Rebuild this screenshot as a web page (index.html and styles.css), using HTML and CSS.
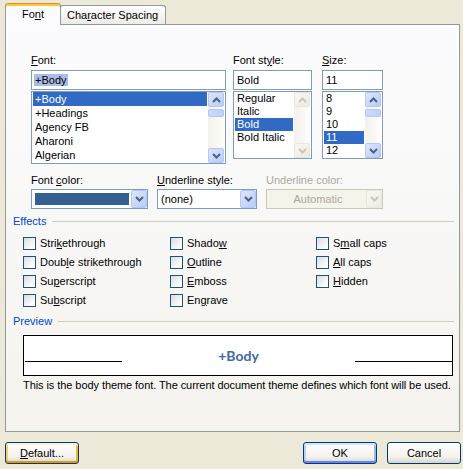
FILE: index.html
```html
<!DOCTYPE html>
<html lang="en">
<head>
    <meta charset="UTF-8">
    <title>Font</title>
    <link rel="stylesheet" href="styles.css">
</head>
<body>
<div class="dialog">
    <div class="tabs">
        <div class="tab tab-active">Fo<u>n</u>t</div>
        <div class="tab">Cha<u>r</u>acter Spacing</div>
    </div>

    <div class="panel">
        <div class="pickers">
            <div class="picker picker-font">
                <div class="label"><u>F</u>ont:</div>
                <div class="input"><span class="sel-text">+Body</span></div>
                <div class="listbox lb-font">
                    <ul class="items">
                        <li class="selected">+Body</li>
                        <li>+Headings</li>
                        <li>Agency FB</li>
                        <li>Aharoni</li>
                        <li>Algerian</li>
                    </ul>
                    <div class="scrollbar">
                        <div class="sb-btn"><svg width="9" height="6" viewBox="0 0 9 6"><polyline points="1,5 4.5,1.5 8,5" /></svg></div>
                        <div class="sb-track"><div class="sb-thumb"></div></div>
                        <div class="sb-btn"><svg width="9" height="6" viewBox="0 0 9 6"><polyline points="1,1 4.5,4.5 8,1" /></svg></div>
                    </div>
                </div>
            </div>

            <div class="picker picker-style">
                <div class="label">Font st<u>y</u>le:</div>
                <div class="input">Bold</div>
                <div class="listbox lb-small">
                    <ul class="items">
                        <li>Regular</li>
                        <li>Italic</li>
                        <li class="selected">Bold</li>
                        <li>Bold Italic</li>
                    </ul>
                    <div class="scrollbar sb-disabled">
                        <div class="sb-btn"><svg width="9" height="6" viewBox="0 0 9 6"><polyline points="1,5 4.5,1.5 8,5" /></svg></div>
                        <div class="sb-track"></div>
                        <div class="sb-btn"><svg width="9" height="6" viewBox="0 0 9 6"><polyline points="1,1 4.5,4.5 8,1" /></svg></div>
                    </div>
                </div>
            </div>

            <div class="picker picker-size">
                <div class="label"><u>S</u>ize:</div>
                <div class="input">11</div>
                <div class="listbox lb-small">
                    <ul class="items">
                        <li>8</li>
                        <li>9</li>
                        <li>10</li>
                        <li class="selected">11</li>
                        <li>12</li>
                    </ul>
                    <div class="scrollbar">
                        <div class="sb-btn"><svg width="9" height="6" viewBox="0 0 9 6"><polyline points="1,5 4.5,1.5 8,5" /></svg></div>
                        <div class="sb-track"><div class="sb-thumb"></div></div>
                        <div class="sb-btn"><svg width="9" height="6" viewBox="0 0 9 6"><polyline points="1,1 4.5,4.5 8,1" /></svg></div>
                    </div>
                </div>
            </div>
        </div>

        <div class="combos">
            <div class="field field-color">
                <div class="label">Font <u>c</u>olor:</div>
                <div class="combo">
                    <div class="swatch"></div>
                    <div class="combo-btn"><svg width="9" height="6" viewBox="0 0 9 6"><polyline points="1,1 4.5,4.5 8,1" /></svg></div>
                </div>
            </div>
            <div class="field field-underline">
                <div class="label"><u>U</u>nderline style:</div>
                <div class="combo">
                    <span class="combo-text">(none)</span>
                    <div class="combo-btn"><svg width="9" height="6" viewBox="0 0 9 6"><polyline points="1,1 4.5,4.5 8,1" /></svg></div>
                </div>
            </div>
            <div class="field field-ucolor disabled">
                <div class="label">Underline color:</div>
                <div class="combo">
                    <span class="combo-text">Automatic</span>
                    <div class="combo-btn"><svg width="9" height="6" viewBox="0 0 9 6"><polyline points="1,1 4.5,4.5 8,1" /></svg></div>
                </div>
            </div>
        </div>

        <div class="group-title title-effects">Effects</div>
        <div class="effects">
            <div class="check"><span class="box"></span><span>Stri<u>k</u>ethrough</span></div>
            <div class="check"><span class="box"></span><span>Shado<u>w</u></span></div>
            <div class="check"><span class="box"></span><span>S<u>m</u>all caps</span></div>
            <div class="check"><span class="box"></span><span>Doub<u>l</u>e strikethrough</span></div>
            <div class="check"><span class="box"></span><span><u>O</u>utline</span></div>
            <div class="check"><span class="box"></span><span><u>A</u>ll caps</span></div>
            <div class="check"><span class="box"></span><span>Su<u>p</u>erscript</span></div>
            <div class="check"><span class="box"></span><span><u>E</u>mboss</span></div>
            <div class="check"><span class="box"></span><span><u>H</u>idden</span></div>
            <div class="check"><span class="box"></span><span>Su<u>b</u>script</span></div>
            <div class="check"><span class="box"></span><span>En<u>g</u>rave</span></div>
        </div>

        <div class="group-title title-preview">Preview</div>
        <div class="preview-box">
            <div class="preview-rule"></div>
            <div class="preview-text">+Body</div>
            <div class="preview-rule"></div>
        </div>
        <div class="preview-note">This is the body theme font. The current document theme defines which font will be used.</div>
    </div>

    <div class="buttons">
        <button class="btn btn-default"><u>D</u>efault...</button>
        <button class="btn btn-ok">OK</button>
        <button class="btn btn-cancel">Cancel</button>
    </div>
</div>
</body>
</html>
```

FILE: styles.css
```css
* { box-sizing: border-box; }

body {
    margin: 0;
    background: #ECE9D8;
    font: 11px/13px "Liberation Sans", Arial, sans-serif;
    color: #000;
}

.dialog {
    width: 463px;
    height: 469px;
    padding: 3px 2px 0 5px;
}

/* tabs */
.tabs {
    display: flex;
    align-items: flex-end;
    height: 21px;
}
.tab {
    height: 19px;
    padding: 3px 7px 0 6px;
    border: 1px solid #919B9C;
    border-bottom: none;
    border-radius: 3px 3px 0 0;
    background: linear-gradient(#FFFFFF, #ECEBE5);
    white-space: nowrap;
}
.tab-active {
    position: relative;
    z-index: 1;
    width: 56px;
    height: 22px;
    margin-bottom: -1px;
    padding: 4px 0 0;
    text-align: center;
    border-top: 1px solid #E68B2C;
    box-shadow: inset 0 2px #FFC73C;
    background: #FCFCFE;
}
.tab-active + .tab { margin-left: -1px; }

.panel {
    width: 455px;
    height: 408px;
    border: 1px solid #919B9C;
    background: linear-gradient(#FCFCFE, #F4F3EE);
    padding: 29px 5px 0 7px;
}

/* font / style / size pickers */
.pickers {
    display: flex;
    margin-left: 18px;
}
.picker-font { width: 195px; }
.picker-style { width: 79px; margin-left: 7px; }
.picker-size { width: 61px; margin-left: 10px; }

.label { margin-bottom: 3px; }

.input {
    height: 20px;
    margin-bottom: 1px;
    padding: 3px 2px 0 3px;
    border: 1px solid #7F9DB9;
    background: #fff;
}
.sel-text { background: #ABBDE7; padding: 0 1px; margin-left: -1px; }

.listbox {
    display: flex;
    padding: 0 1px;
    border: 1px solid #7F9DB9;
    background: #fff;
}
.lb-font { height: 73px; }
.lb-small { height: 68px; }

.items {
    flex: 1;
    margin: 0;
    padding: 0;
    list-style: none;
    overflow: hidden;
}
.items li {
    height: 13px;
    line-height: 13px;
    padding-left: 2px;
    white-space: nowrap;
}
.lb-font .items li { height: 14px; line-height: 14px; }
.items li.selected { background: #316AC5; color: #fff; }

.scrollbar {
    width: 16px;
    margin-left: 1px;
    display: flex;
    flex-direction: column;
    background: linear-gradient(to right, #F3F1EC, #FDFDFA);
}
.sb-btn {
    height: 15px;
    display: flex;
    align-items: center;
    justify-content: center;
    border: 1px solid #B4C8F6;
    border-radius: 2px;
    background: linear-gradient(135deg, #DCE6FE, #B9CCF7);
}
.sb-btn svg polyline,
.combo-btn svg polyline {
    fill: none;
    stroke: #4D6185;
    stroke-width: 2;
}
.sb-track { flex: 1; padding-top: 2px; }
.sb-thumb {
    height: 8px;
    border: 1px solid #B4C8F6;
    border-radius: 2px;
    background: linear-gradient(to right, #CCDBFD, #BDD0F8);
}
.sb-disabled .sb-btn {
    border-color: #E8E6DD;
    background: linear-gradient(135deg, #F9F8F3, #ECEAE2);
}
.sb-disabled .sb-btn svg polyline { stroke: #C9C7BA; }

/* colour and underline combos */
.combos {
    display: flex;
    margin: 10px 0 0 18px;
}
.field .label { margin-bottom: 2px; }
.field-color { width: 117px; }
.field-underline { width: 100px; margin-left: 9px; }
.field-ucolor { width: 117px; margin-left: 9px; }

.combo {
    display: flex;
    align-items: center;
    height: 20px;
    border: 1px solid #7F9DB9;
    background: #fff;
}
.combo-text { flex: 1; padding-left: 3px; }
.swatch {
    width: 94px;
    height: 12px;
    margin-left: 3px;
    background: #345F91;
}
.combo-btn {
    width: 16px;
    height: 18px;
    margin-left: auto;
    display: flex;
    align-items: center;
    justify-content: center;
    border: 1px solid #B4C8F6;
    border-radius: 2px;
    background: linear-gradient(135deg, #DCE6FE, #B9CCF7);
}
.disabled .label { color: #ACA899; }
.disabled .combo { border-color: #C9C7BA; background: #F5F4EA; }
.disabled .combo-text { text-align: center; color: #ACA899; }
.disabled .combo-btn { border-color: #E8E6DD; background: linear-gradient(135deg, #F9F8F3, #ECEAE2); }
.disabled .combo-btn svg polyline { stroke: #C9C7BA; }

/* group boxes */
.group-title {
    display: flex;
    align-items: center;
    color: #0046D5;
}
.group-title::after {
    content: "";
    flex: 1;
    height: 1px;
    margin-left: 6px;
    background: #D0D0BF;
}
.title-effects { margin-top: 6px; }
.title-preview { margin-top: 5px; }

.effects {
    display: grid;
    grid-template-columns: 147px 146px auto;
    grid-auto-rows: 19px;
    margin: 6px 0 0 10px;
}
.check {
    display: flex;
    align-items: center;
    gap: 4px;
    white-space: nowrap;
}
.box {
    width: 13px;
    height: 13px;
    border: 1px solid #1C5180;
    background: linear-gradient(135deg, #DCDCD7, #FFFFFF 85%);
}

.preview-box {
    display: flex;
    align-items: center;
    width: 430px;
    height: 41px;
    margin: 7px 0 0 10px;
    padding-left: 1px;
    border: 1px solid #000;
    background: #fff;
}
.preview-rule {
    width: 97px;
    height: 1px;
    margin-top: 12px;
    background: #000;
}
.preview-text {
    flex: 1;
    text-align: center;
    font: bold 14px "Lato", "Liberation Sans", sans-serif;
    color: #4169A8;
}
.preview-note {
    margin: 3px 0 0 10px;
    white-space: nowrap;
    letter-spacing: -0.07px;
}

/* bottom buttons */
.buttons {
    display: flex;
    margin-top: 10px;
}
.btn {
    width: 74px;
    height: 22px;
    padding: 0;
    font: 11px "Liberation Sans", Arial, sans-serif;
    color: #000;
    border: 1px solid #003C74;
    border-radius: 3px;
    background: linear-gradient(#FFFFFF, #F3F2EE 70%, #D8D4CA);
}
.btn-default {
    box-shadow: inset 0 2px #FFF0CF, inset 0 -2px #E5970B, inset 2px 0 #FBCA6A, inset -2px 0 #F8B330;
}
.btn-ok {
    margin-left: auto;
    box-shadow: inset 0 2px #CEE7FF, inset 0 -2px #6982EE, inset 2px 0 #B8D2F8, inset -2px 0 #98B8EA;
}
.btn-cancel { margin-left: 10px; }
```
